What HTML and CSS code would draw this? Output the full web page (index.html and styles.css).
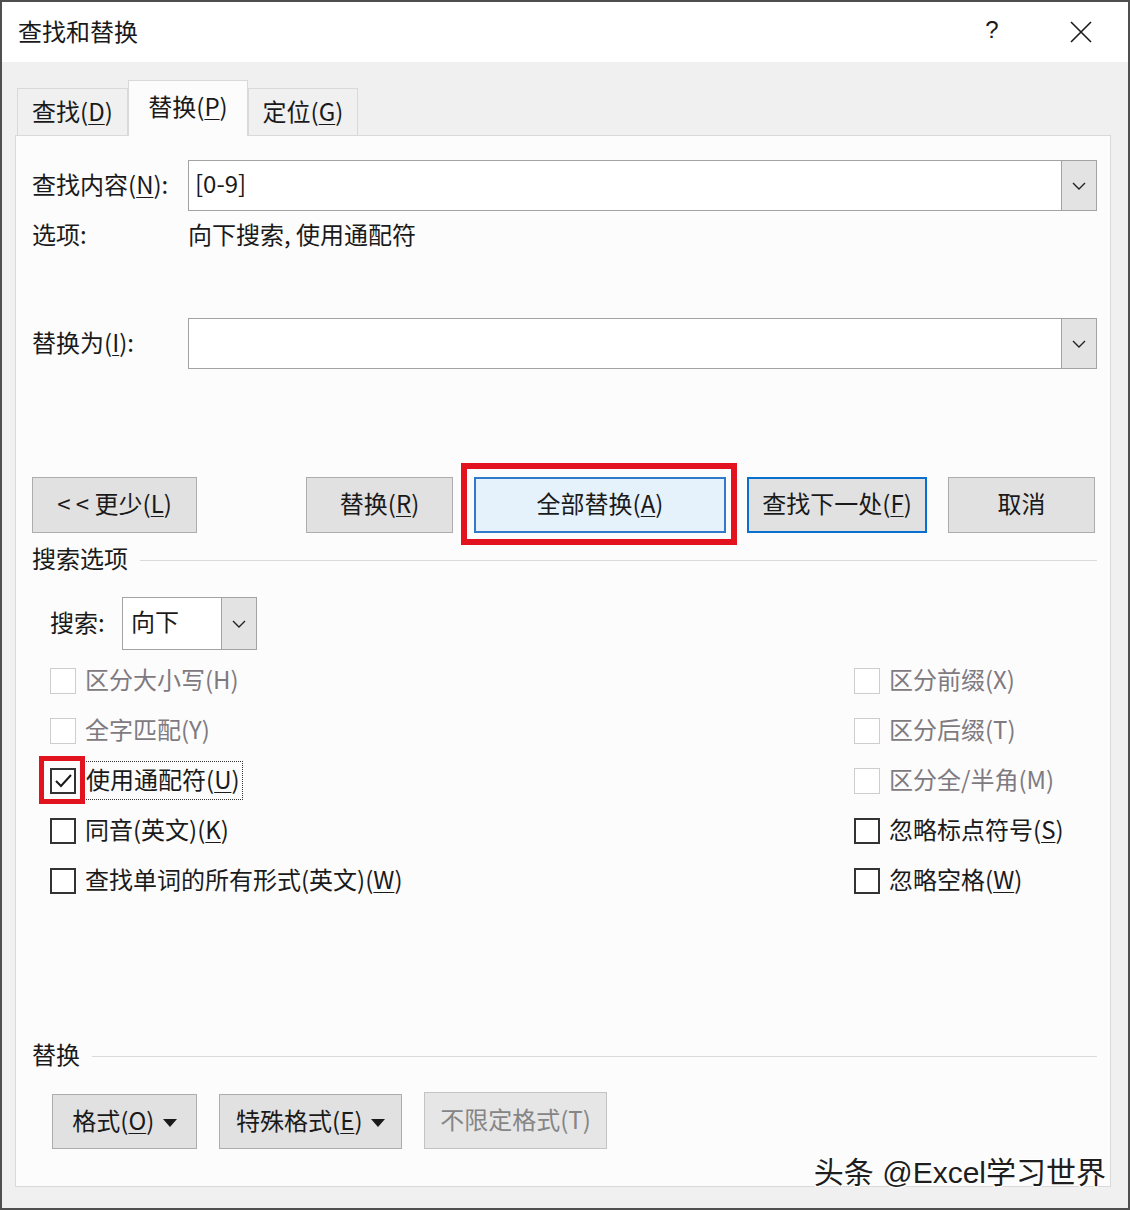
FILE: index.html
```html
<!DOCTYPE html>
<html>

<head>
    <title>查找和替换</title>
    <link rel="stylesheet" href="styles.css">
</head>

<body>
    <div class="window">
        <div class="titlebar">
            <span class="title">查找和替换</span>
            <span class="help">?</span>
            <span class="close">
                <svg width="22" height="22" viewBox="0 0 22 22">
                    <path d="M1 1 L21 21 M21 1 L1 21" stroke="#1a1a1a" stroke-width="1.6" fill="none" />
                </svg>
            </span>
        </div>

        <div class="tabs">
            <div class="tab"><span>查找(<u>D</u>)</span></div>
            <div class="tab active"><span>替换(<u>P</u>)</span></div>
            <div class="tab"><span>定位(<u>G</u>)</span></div>
        </div>

        <div class="panel">
            <div class="field-row">
                <div class="field-label">查找内容(<u>N</u>):</div>
                <div class="combo">
                    <div class="combo-text">[0-9]</div>
                    <div class="combo-btn">
                        <svg width="14" height="8" viewBox="0 0 14 8">
                            <path d="M1 1 L7 7 L13 1" stroke="#222" stroke-width="1.4" fill="none" />
                        </svg>
                    </div>
                </div>
            </div>

            <div class="info-row">
                <div class="field-label">选项:</div>
                <div>向下搜索, 使用通配符</div>
            </div>

            <div class="field-row replace-row">
                <div class="field-label">替换为(<u>I</u>):</div>
                <div class="combo">
                    <div class="combo-text"></div>
                    <div class="combo-btn">
                        <svg width="14" height="8" viewBox="0 0 14 8">
                            <path d="M1 1 L7 7 L13 1" stroke="#222" stroke-width="1.4" fill="none" />
                        </svg>
                    </div>
                </div>
            </div>

            <div class="button-row">
                <button class="btn btn-less">&lt; &lt; 更少(<u>L</u>)</button>
                <button class="btn btn-replace">替换(<u>R</u>)</button>
                <button class="btn btn-all">全部替换(<u>A</u>)</button>
                <button class="btn btn-next">查找下一处(<u>F</u>)</button>
                <button class="btn btn-cancel">取消</button>
            </div>

            <div class="section-head">
                <span>搜索选项</span>
                <div class="rule"></div>
            </div>

            <div class="search-row">
                <div class="search-label">搜索:</div>
                <div class="select">
                    <div class="select-text">向下</div>
                    <div class="combo-btn">
                        <svg width="14" height="8" viewBox="0 0 14 8">
                            <path d="M1 1 L7 7 L13 1" stroke="#222" stroke-width="1.4" fill="none" />
                        </svg>
                    </div>
                </div>
            </div>

            <div class="options">
                <label class="check disabled"><span class="box"></span><span class="text">区分大小写(H)</span></label>
                <label class="check disabled"><span class="box"></span><span class="text">区分前缀(X)</span></label>

                <label class="check disabled"><span class="box"></span><span class="text">全字匹配(Y)</span></label>
                <label class="check disabled"><span class="box"></span><span class="text">区分后缀(T)</span></label>

                <label class="check">
                    <span class="box checked">
                        <svg width="22" height="22" viewBox="0 0 22 22">
                            <path d="M4 11 L9 16 L19 5" stroke="#1a1a1a" stroke-width="2" fill="none" />
                        </svg>
                    </span>
                    <span class="text focus">使用通配符(<u>U</u>)</span>
                </label>
                <label class="check disabled"><span class="box"></span><span class="text">区分全/半角(M)</span></label>

                <label class="check"><span class="box"></span><span class="text">同音(英文)(<u>K</u>)</span></label>
                <label class="check"><span class="box"></span><span class="text">忽略标点符号(<u>S</u>)</span></label>

                <label class="check"><span class="box"></span><span class="text">查找单词的所有形式(英文)(<u>W</u>)</span></label>
                <label class="check"><span class="box"></span><span class="text">忽略空格(<u>W</u>)</span></label>
            </div>

            <div class="section-head replace-head">
                <span>替换</span>
                <div class="rule"></div>
            </div>

            <div class="format-row">
                <button class="btn btn-format">格式(<u>O</u>) <span class="caret"></span></button>
                <button class="btn btn-special">特殊格式(<u>E</u>) <span class="caret"></span></button>
                <button class="btn btn-noformat" disabled>不限定格式(T)</button>
            </div>
        </div>

        <div class="watermark">头条 @Excel学习世界</div>
    </div>
</body>

</html>
```

FILE: styles.css
```css
body {
    margin: 0;
    font-family: "Noto Sans CJK SC", "Liberation Sans", sans-serif;
    color: #1a1a1a;
}

.window {
    position: relative;
    width: 1130px;
    height: 1210px;
    box-sizing: border-box;
    border: 2px solid #4f4f4f;
    background-color: #f0f0f0;
    display: flex;
    flex-direction: column;
}

u {
    text-decoration-thickness: 1px;
    text-underline-offset: 3px;
}

/* title bar */
.titlebar {
    height: 60px;
    box-sizing: border-box;
    padding: 0 27px 4px 16px;
    background-color: #fff;
    display: flex;
    align-items: center;
}

.title {
    font-size: 24px;
}

.help {
    margin-left: auto;
    width: 30px;
    text-align: center;
    font-size: 24px;
    font-family: "Liberation Sans", sans-serif;
}

.close {
    margin-left: 54px;
    width: 40px;
    display: flex;
    justify-content: center;
    padding-top: 4px;
}

/* tabs */
.tabs {
    margin-top: 18px;
    padding-left: 15px;
    height: 55px;
    display: flex;
    align-items: flex-end;
}

.tab {
    height: 47px;
    box-sizing: border-box;
    border: 1px solid #d9d9d9;
    border-bottom: none;
    background-color: #f0f0f0;
    font-size: 24px;
    display: flex;
    align-items: center;
    justify-content: center;
    padding-bottom: 4px;
}

.tab:first-child {
    width: 111px;
}

.tab:last-child {
    width: 110px;
}

.tab.active {
    width: 120px;
    height: 56px;
    margin-bottom: -1px;
    background-color: #fcfcfc;
    position: relative;
    z-index: 1;
    padding-bottom: 7px;
}

/* panel */
.panel {
    margin-left: 13px;
    width: 1096px;
    height: 1052px;
    box-sizing: border-box;
    border: 1px solid #d9d9d9;
    background-color: #fcfcfc;
    padding: 24px 13px 0 16px;
    font-size: 24px;
}

.field-row {
    display: flex;
    align-items: center;
    height: 51px;
}

.field-label {
    width: 156px;
    flex-shrink: 0;
}

.field-row .field-label {
    padding-bottom: 5px;
}

.combo {
    flex: 1;
    height: 51px;
    box-sizing: border-box;
    border: 1px solid #a3a3a3;
    background-color: #fff;
    display: flex;
}

.combo-text {
    flex: 1;
    padding-left: 6px;
    line-height: 44px;
}

.combo-btn {
    width: 34px;
    border-left: 1px solid #a3a3a3;
    background-color: #e3e3e3;
    display: flex;
    align-items: center;
    justify-content: center;
}

.info-row {
    margin-top: 8px;
    height: 33px;
    line-height: 30px;
    display: flex;
}

.replace-row {
    margin-top: 66px;
}

/* buttons */
.button-row {
    margin-top: 108px;
    padding-right: 2px;
    display: flex;
    gap: 21px;
}

.btn {
    height: 56px;
    box-sizing: border-box;
    border: 1px solid #adadad;
    background-color: #e1e1e1;
    font-family: inherit;
    font-size: 24px;
    color: #1a1a1a;
    padding: 0 0 5px;
}

.btn-less {
    width: 165px;
}

.btn-replace {
    width: 147px;
    margin-left: auto;
}

.btn-all {
    width: 252px;
    position: relative;
    border: 2px solid #2f7bc9;
    background-color: #e5f1fb;
}

.btn-all::after {
    content: "";
    position: absolute;
    top: -16px;
    left: -15px;
    right: -13px;
    bottom: -14px;
    border: 6px solid #e3121f;
}

.btn-next {
    width: 180px;
    border: 2px solid #0a70d0;
}

.btn-cancel {
    width: 147px;
}

/* search options */
.section-head {
    margin-top: 12px;
    height: 30px;
    display: flex;
    align-items: center;
    gap: 12px;
}

.section-head span {
    margin-bottom: 5px;
}

.rule {
    flex: 1;
    height: 1px;
    background-color: #dadada;
}

.search-row {
    margin-top: 22px;
    padding-left: 18px;
    display: flex;
    align-items: center;
}

.search-label {
    width: 72px;
    padding-bottom: 5px;
}

.select {
    width: 135px;
    height: 53px;
    box-sizing: border-box;
    border: 1px solid #a3a3a3;
    background-color: #fff;
    display: flex;
}

.select-text {
    flex: 1;
    padding-left: 8px;
    line-height: 46px;
}

.options {
    margin-top: 6px;
    padding-left: 18px;
    display: grid;
    grid-template-columns: 804px 1fr;
    grid-auto-rows: 50px;
}

.check {
    display: flex;
    align-items: center;
    gap: 9px;
}

.check .text {
    margin-bottom: 5px;
}

.box {
    width: 26px;
    height: 26px;
    box-sizing: border-box;
    border: 2px solid #333;
    background-color: #fff;
    display: flex;
    align-items: center;
    justify-content: center;
    flex-shrink: 0;
}

.check.disabled {
    color: #7f7a80;
}

.check.disabled .box {
    border: 1.5px solid #cdcdcd;
}

.box.checked {
    position: relative;
}

.box.checked::after {
    content: "";
    position: absolute;
    top: -14px;
    left: -13px;
    right: -11px;
    bottom: -12px;
    border: 5px solid #e3121f;
}

.check .focus {
    margin-left: -2px;
    margin-bottom: 2px;
    padding: 0 2px 3px;
    line-height: 34px;
    border: 1px dotted #333;
}

/* replace section */
.replace-head {
    margin-top: 135px;
}

.format-row {
    margin-top: 23px;
    padding-left: 20px;
    display: flex;
    gap: 22px;
}

.btn-format {
    width: 145px;
    height: 55px;
}

.btn-special {
    width: 183px;
    height: 55px;
}

.btn-noformat {
    width: 183px;
    height: 57px;
    margin-top: -2px;
    color: #858585;
    background-color: #e6e6e6;
    border-color: #c3c3c3;
}

.caret {
    display: inline-block;
    margin-left: 3px;
    vertical-align: middle;
    border-left: 7px solid transparent;
    border-right: 7px solid transparent;
    border-top: 8px solid #1a1a1a;
}

.watermark {
    position: absolute;
    right: 22px;
    top: 1146px;
    font-family: "Liberation Sans", "Noto Sans CJK SC", sans-serif;
    font-size: 30px;
    color: #1e1e1e;
    text-shadow: 1px 1px 0 #fff, -1px -1px 0 #fff, 1px -1px 0 #fff, -1px 1px 0 #fff;
}
```
